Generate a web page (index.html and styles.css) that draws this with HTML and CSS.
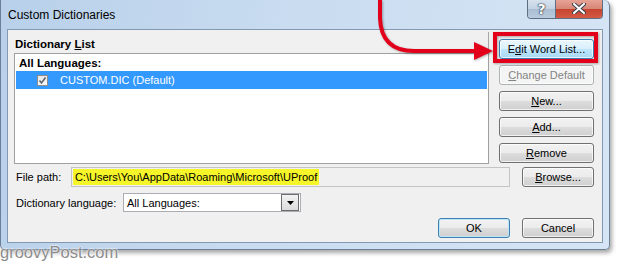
FILE: index.html
```html
<!DOCTYPE html>
<html lang="en">
<head>
	<meta charset="UTF-8">
	<title>Custom Dictionaries</title>
	<link rel="stylesheet" href="styles.css">
</head>
<body>
<div class="window">
  <div class="titlebar">
    <span class="title">Custom Dictionaries</span>
    <div class="caption-buttons">
      <span class="cap help">?</span>
      <span class="cap close">
        <svg width="14" height="11" viewBox="0 0 14 11"><path d="M2 1 L12 10 M12 1 L2 10" stroke="#3a4150" stroke-width="4" stroke-linecap="round"/><path d="M2 1 L12 10 M12 1 L2 10" stroke="#fff" stroke-width="2" stroke-linecap="round"/></svg>
      </span>
    </div>
  </div>
  <div class="client">
    <div class="top">
      <div class="list-pane">
        <div class="pane-label">Dictionary <u>L</u>ist</div>
        <div class="listbox">
          <div class="group-head">All Languages:</div>
          <div class="item selected">
            <span class="check"><svg width="9" height="9" viewBox="0 0 9 9"><path d="M1.5 4.5 L3.5 7 L7.5 1.5" fill="none" stroke="#5d6570" stroke-width="1.6"/></svg></span>
            CUSTOM.DIC (Default)
          </div>
        </div>
      </div>
      <div class="side-buttons">
        <button class="btn hot">E<u>d</u>it Word List...</button>
        <button class="btn" disabled><u>C</u>hange Default</button>
        <button class="btn"><u>N</u>ew...</button>
        <button class="btn"><u>A</u>dd...</button>
        <button class="btn"><u>R</u>emove</button>
      </div>
    </div>
    <div class="row path-row">
      <span class="label path-label">File path:</span>
      <div class="path-field"><span class="marker">C:\Users\You\AppData\Roaming\Microsoft\UProof</span></div>
      <button class="btn browse"><u>B</u>rowse...</button>
    </div>
    <div class="row lang-row">
      <span class="label lang-label">Dictionary language:</span>
      <div class="combo">
        <span class="combo-text">All Languages:</span>
        <span class="combo-arrow"><svg width="7" height="4" viewBox="0 0 7 4"><path d="M0 0 H7 L3.5 4 Z" fill="#000"/></svg></span>
      </div>
    </div>
    <div class="row footer">
      <button class="btn default">OK</button>
      <button class="btn">Cancel</button>
    </div>
  </div>
</div>

<svg class="annotation" width="620" height="264" viewBox="0 0 620 264">
  <path d="M380 -4 L380 18 Q381 51 414 51 L478 51" fill="none" stroke="#e3001b" stroke-width="4"/>
  <polygon points="474,42 493,51 474,60" fill="#e3001b"/>
  <rect x="495" y="34" width="101" height="27" fill="none" stroke="#e3001b" stroke-width="4"/>
</svg>
<div class="watermark">groovyPost.com</div>
</body>
</html>
```

FILE: styles.css
```css
body {
    margin: 0;
    background: #fff;
    font-family: "Liberation Sans", Arial, sans-serif;
    font-size: 11px;
    color: #000;
    position: relative;
    width: 620px;
    height: 264px;
    overflow: hidden;
}
.window {
    width: 610px;
    height: 250px;
    box-sizing: border-box;
    display: flex;
    flex-direction: column;
    padding: 0 6px 6px 6px;
    border: 1px solid #6b7f96;
    border-top: none;
    border-radius: 0 6px 5px 5px;
    background: linear-gradient(100deg, #b8d0ea 0%, #c9dcf0 45%, #d6e5f5 100%);
    box-shadow: 2px 3px 4px rgba(0, 0, 0, 0.35);
}
.titlebar {
    height: 29px;
    display: flex;
    justify-content: space-between;
    padding-left: 1px;
}
.title {
    line-height: 30px;
    font-size: 12px;
}
.caption-buttons {
    display: flex;
    height: 19px;
    border: 1px solid #5e6f84;
    border-top: none;
    border-radius: 0 0 4px 4px;
    overflow: hidden;
    margin-top: -1px;
}
.cap {
    display: flex;
    align-items: center;
    justify-content: center;
}
.help {
    width: 27px;
    border-right: 1px solid #5e6f84;
    background: linear-gradient(#d9e4ef 0%, #c4d3e3 50%, #a9bdd2 51%, #b9cbdd 100%);
    color: #fff;
    font: bold 14px "DejaVu Sans", sans-serif;
    text-shadow: 0 0 1px #2d3a4a, 0 0 1px #2d3a4a, 0 0 2px #2d3a4a;
}
.close {
    width: 46px;
    background: linear-gradient(#e8a799 0%, #d88676 50%, #c5432f 51%, #d45a45 100%);
}
.client {
    flex: 1;
    background: #f0f0f0;
    border: 1px solid #8398b1;
    padding: 8px 8px 0 6px;
    display: flex;
    flex-direction: column;
}
.top {
    display: flex;
    gap: 10px;
}
.list-pane {
    flex: 1;
}
.pane-label {
    height: 21px;
    box-sizing: border-box;
    margin-top: -6px;
    padding: 5px 0 0 1px;
    line-height: 14px;
    font-size: 11.5px;
    font-weight: bold;
    border-right: 1px solid #a7a7a7;
}
.listbox {
    height: 111px;
    box-sizing: border-box;
    background: #fff;
    border: 1px solid #a0a0a0;
    padding: 1px;
}
.group-head {
    height: 16px;
    line-height: 16px;
    font-size: 11.5px;
    font-weight: bold;
    padding-left: 3px;
}
.item {
    height: 18px;
    display: flex;
    align-items: center;
    padding-left: 21px;
}
.selected {
    background: #3399ff;
    color: #fff;
}
.check {
    width: 9px;
    height: 9px;
    border: 1px solid #8c8c8c;
    background: linear-gradient(#e6e6e6, #fafafa);
    margin-right: 12px;
    display: flex;
}
.side-buttons {
    width: 95px;
    margin-top: 1px;
    display: flex;
    flex-direction: column;
    gap: 6px;
}
.btn {
    height: 20px;
    padding: 0;
    font-family: inherit;
    font-size: 11px;
    color: #000;
    border: 1px solid #707070;
    border-radius: 3px;
    background: linear-gradient(#f2f2f2 0%, #ebebeb 50%, #dddddd 51%, #cfcfcf 100%);
    box-shadow: inset 0 0 0 1px rgba(255, 255, 255, 0.7);
}
.btn.hot {
    border-color: #3c7fb1;
    background: linear-gradient(#eaf6fd 0%, #d9f0fc 50%, #bee6fd 51%, #a7d9f5 100%);
}
.btn:disabled {
    color: #838383;
    border-color: #adb2b5;
    background: #f4f4f4;
}
.btn.default {
    border-color: #3c7fb1;
    box-shadow: inset 0 0 0 1px #bfe5f8;
}
.row {
    display: flex;
    align-items: center;
    white-space: nowrap;
}
.label {
    padding-left: 2px;
}
.path-row {
    margin-top: 3px;
    height: 20px;
}
.path-label {
    width: 55px;
}
.path-field {
    width: 440px;
    height: 20px;
    box-sizing: border-box;
    border: 1px solid #c4c4c4;
    background: #f0f0f0;
    padding: 1px 1px;
    display: flex;
    align-items: center;
}
.marker {
    background: #f5f52a;
    line-height: 16px;
    padding: 0 2px;
}
.browse {
    width: 72px;
    margin-left: 12px;
}
.lang-row {
    margin-top: 6px;
    height: 19px;
}
.lang-label {
    width: 107px;
}
.combo {
    width: 178px;
    height: 19px;
    box-sizing: border-box;
    border: 1px solid #abadb3;
    background: #fff;
    display: flex;
    align-items: center;
    justify-content: space-between;
}
.combo-text {
    padding-left: 3px;
}
.combo-arrow {
    width: 16px;
    height: 15px;
    margin-right: 1px;
    border: 1px solid #6e6e6e;
    background: linear-gradient(#f2f2f2, #dcdcdc);
    display: flex;
    align-items: center;
    justify-content: center;
}
.footer {
    margin-top: 6px;
    justify-content: flex-end;
    gap: 12px;
}
.footer .btn {
    height: 20px;
    width: 72px;
}
.annotation {
    position: absolute;
    left: 0;
    top: 0;
    pointer-events: none;
    filter: drop-shadow(1px 1px 1px rgba(0, 0, 0, 0.3));
}
.watermark {
    position: absolute;
    left: 0;
    top: 243px;
    font-family: "Liberation Sans", sans-serif;
    font-size: 16.5px;
    color: #8c8c8c;
    text-shadow: 0 0 2px #fff, 0 0 2px #fff;
}
```
